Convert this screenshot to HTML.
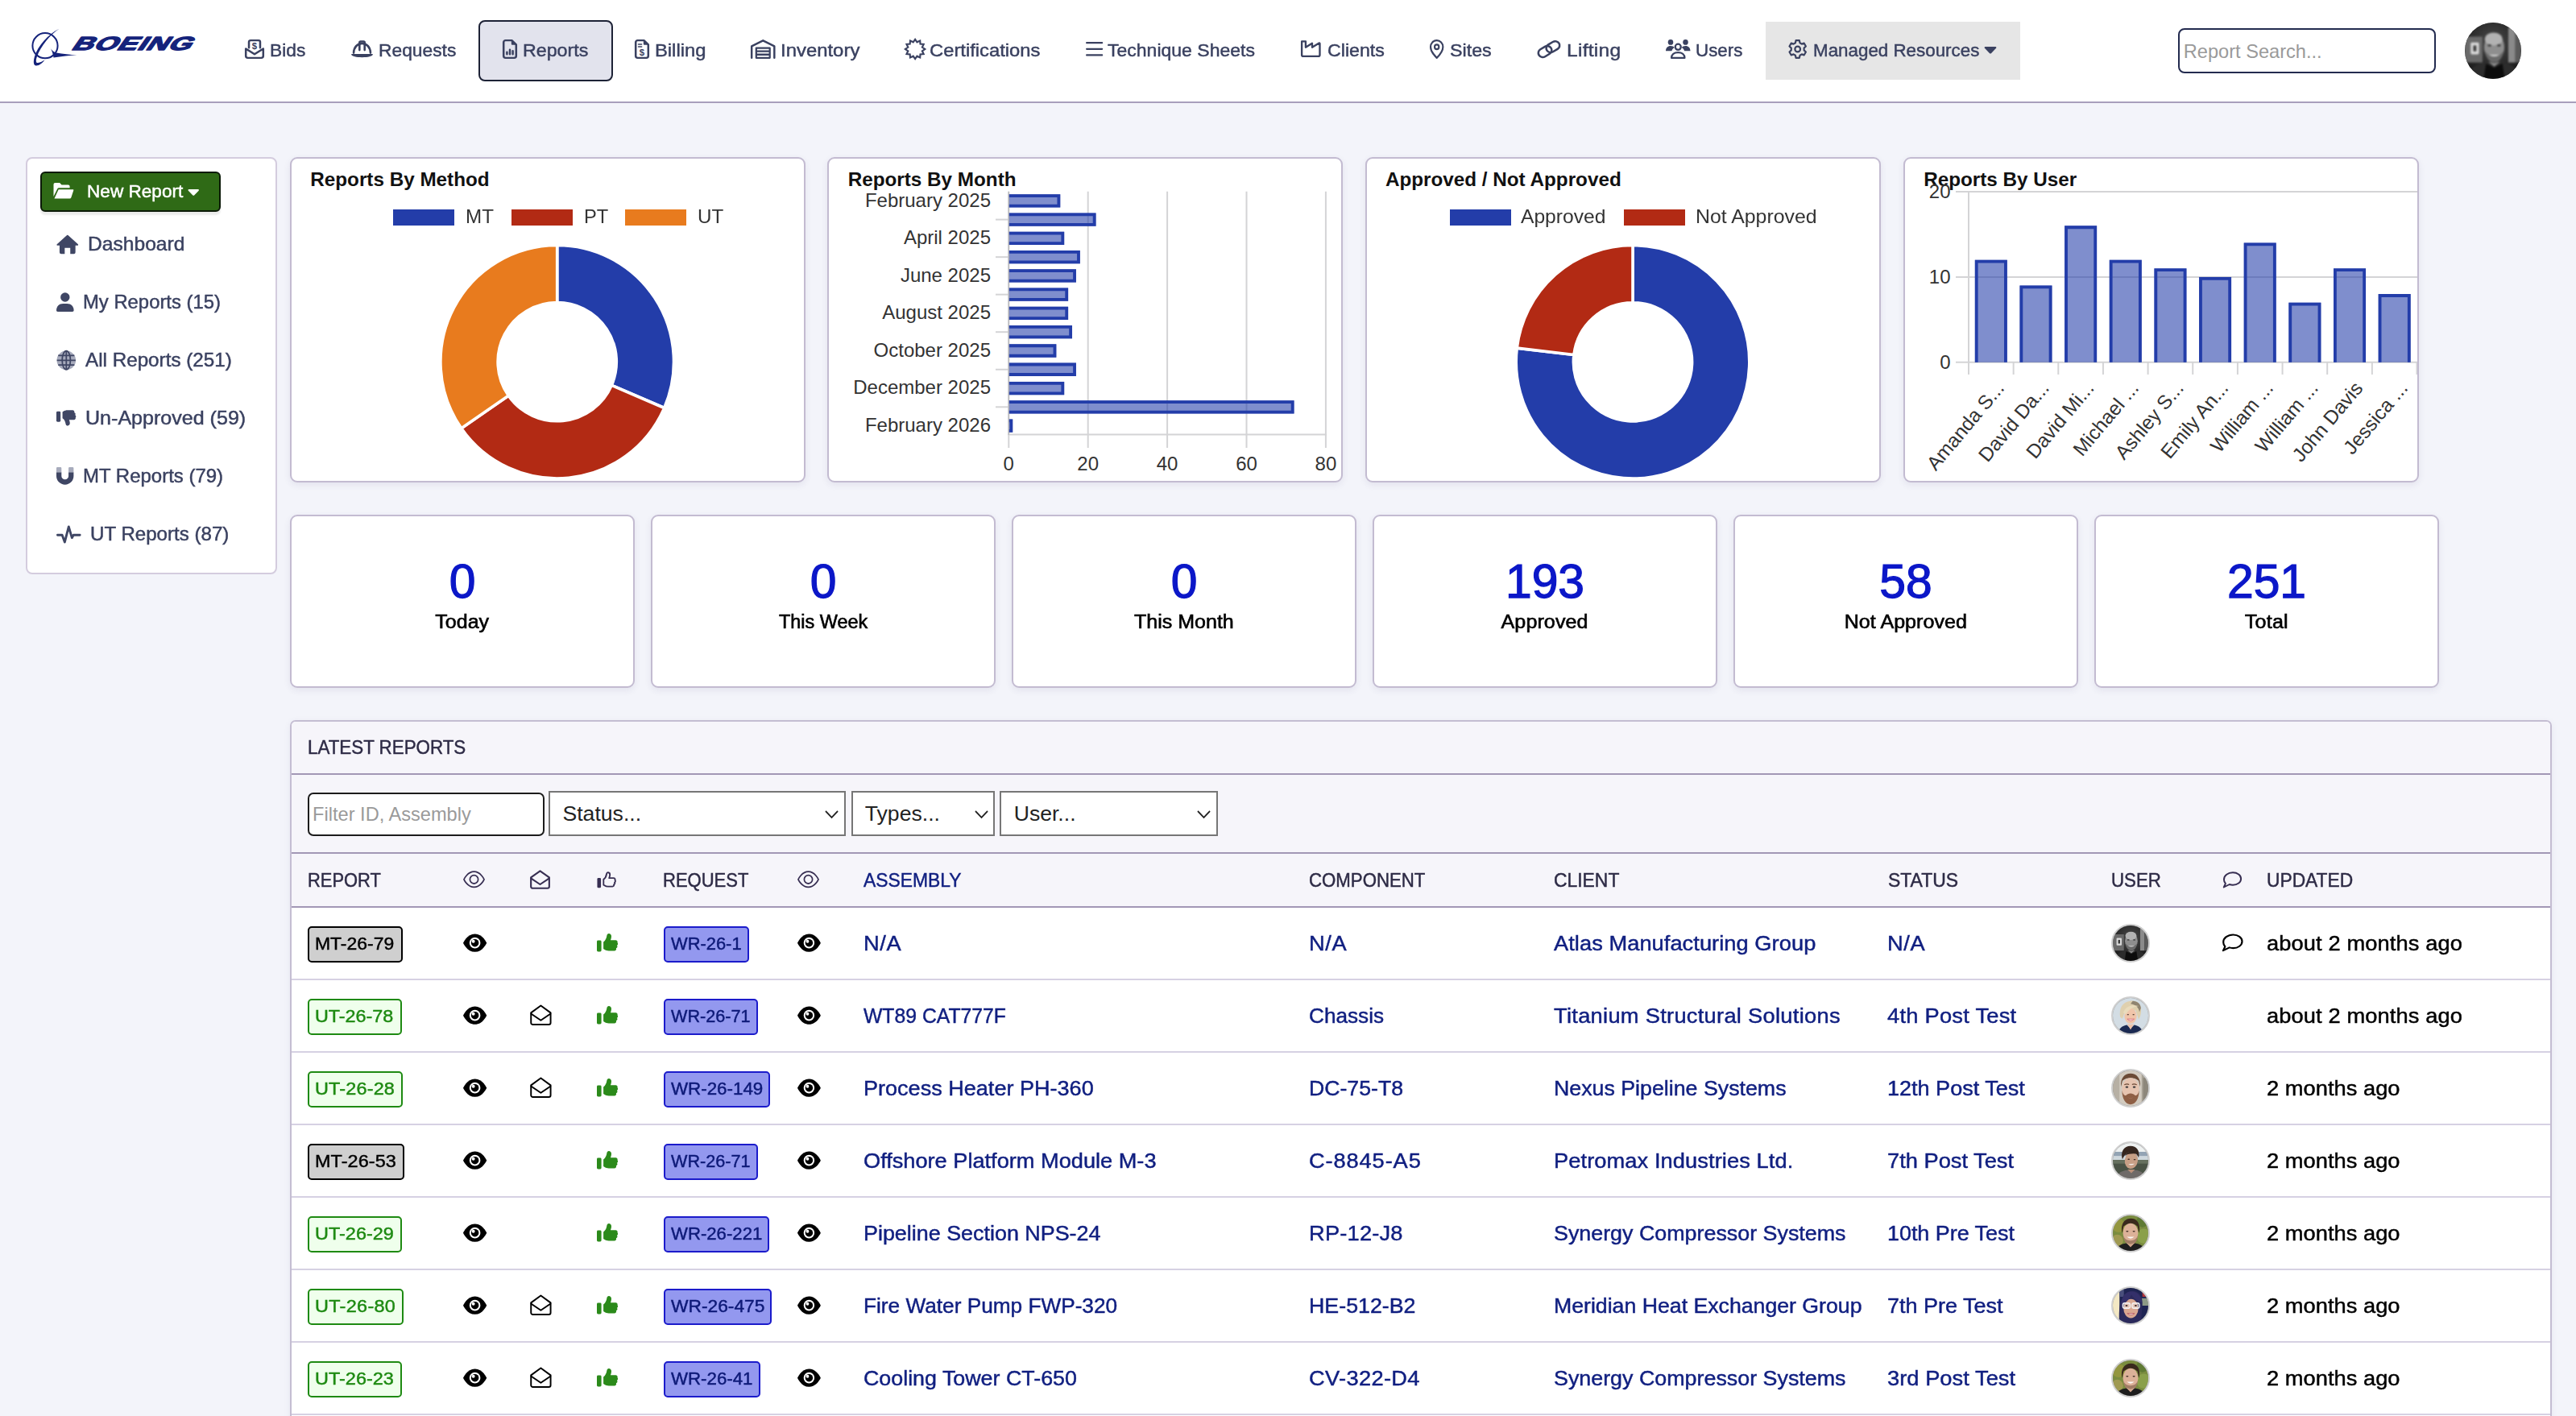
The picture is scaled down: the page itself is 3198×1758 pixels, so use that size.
<!DOCTYPE html>
<html lang="en"><head><meta charset="utf-8"><title>Reports Dashboard</title>
<style>
*{margin:0;padding:0;box-sizing:content-box}
html,body{width:3198px;height:1758px;overflow:hidden;background:#f3f4fa;font-family:"Liberation Sans",sans-serif;color:#111}
body{position:relative}
.a{position:absolute}
.t{position:absolute;white-space:pre;line-height:1}
.card{background:#fff;border:2px solid #c3bbd1;border-radius:9px;box-shadow:0 3px 9px rgba(70,50,110,.09)}
.m{-webkit-text-stroke:.45px currentColor}
.m2{-webkit-text-stroke:.6px currentColor}
.hl{background:#a297b5}
.rl{background:#d6d1e3}
.badge{border-radius:5px;border:2px solid #000}
.av{border-radius:50%;overflow:hidden;border:2px solid #cfcfcf;background:#888}
a{color:inherit;text-decoration:none}
.f{position:absolute;box-sizing:border-box;font-family:"Liberation Sans",sans-serif;outline:0;margin:0;background:#fff;line-height:normal}
input.f{font-size:23.600px;color:#222}
input.f::placeholder{color:#9a9a9a;opacity:1}
select.f{appearance:none;-webkit-appearance:none;border:2px solid #767676;border-radius:0;color:#222;font-size:26.600px;padding:0 0 0 15.300px}
</style></head><body>
<header class="a " style="left:0px;top:0px;width:3198px;height:126px;background:#fff;border-bottom:2px solid #a89fbc;">
<svg class="a " style="left:40px;top:35px;overflow:visible;" width="205" height="48" viewBox="0 0 205 48"><g transform="translate(-40 -35)" fill="#15237b">
<circle cx="56" cy="56.700" r="15.600" fill="none" stroke="#15237b" stroke-width="2"/>
<path d="M73.500 35.800C62 43 50.500 58 46 70c-1.800 5-1.500 8.500 1 8 3-.5 6-2 8.500-3.500-2.500 3.500-7.500 7.500-11 7-3.500-.5-3-6.500-1.500-11.500C47 57 60 42.500 73.500 35.800z"/>
<path d="M62 58.300c1.500 3.700 4 6.200 8 7.200 8 1.500 17 2.500 25.500 2.800-8.500.7-19.500 1.700-29 3.200-.5-4.500-2.500-9.500-4.500-13.200z"/>
</g>
<text transform="translate(47.600 27) skewX(-35) scale(1.560 1)" font-family="Liberation Sans, sans-serif" font-weight="700" font-size="23.300" letter-spacing=".55" fill="#15237b" stroke="#15237b" stroke-width="1.400" stroke-linejoin="round">BOEING</text></svg>
<nav>
<div class="a " style="left:594px;top:25px;width:162.5px;height:72px;background:#e2e3ed;border:2px solid #1d2236;border-radius:8px;">
</div>
<div class="a " style="left:2192px;top:27px;width:316px;height:72px;background:#e6e6e6;">
</div>
<a href="#">
<svg class="a" style="left:304px;top:48.8px;overflow:visible" width="24" height="24" viewBox="2 1.5 20 21" preserveAspectRatio="none"><path fill="none" stroke="#3a4160" stroke-width="2.1" stroke-linecap="round" stroke-linejoin="round" d="M6.2 10.5V4.2a1.7 1.7 0 0 1 1.7-1.7h8.2a1.7 1.7 0 0 1 1.7 1.7v6.3"/><path fill="none" stroke="#3a4160" stroke-width="2.1" stroke-linecap="round" stroke-linejoin="round" d="M3 11.5v8a2 2 0 0 0 2 2h14a2 2 0 0 0 2-2v-8l-9 6z"/><text x="12" y="11.6" font-family="Liberation Sans, sans-serif" font-size="9.5" font-weight="700" text-anchor="middle" fill="#3a4160">$</text></svg>
<span class="t m" style="left:334.97px;top:52.00px;font-size:22.5px;transform:scaleX(1.0130);transform-origin:0 0;color:#3a4160;">Bids</span>
</a>
<a href="#">
<svg class="a" style="left:436px;top:50.4px;overflow:visible" width="27" height="21.6" viewBox="1 3 22 17" preserveAspectRatio="none"><path fill="none" stroke="#3a4160" stroke-width="2.1" stroke-linecap="round" stroke-linejoin="round" d="M3.500 15.300a8.500 9.300 0 0 1 17 0"/><path fill="none" stroke="#3a4160" stroke-width="2.1" stroke-linecap="round" stroke-linejoin="round" d="M9.400 12.500V5.200a1 1 0 0 1 1-1h3.200a1 1 0 0 1 1 1v7.300"/><path fill="#3a4160" d="M1.500 16.400h21c.3 0 .5.300.4.600-.7 1.700-5 2.700-10.900 2.700S1.800 18.700 1.100 17c-.1-.300.100-.600.400-.600z"/></svg>
<span class="t m" style="left:469.97px;top:52.00px;font-size:22.5px;transform:scaleX(1.0135);transform-origin:0 0;color:#3a4160;">Requests</span>
</a>
<a href="#">
<svg class="a" style="left:624px;top:48.8px;overflow:visible" width="18" height="24" viewBox="4.5 1.5 15 21" preserveAspectRatio="none"><path fill="none" stroke="#3a4160" stroke-width="2.1" stroke-linecap="round" stroke-linejoin="round" d="M14 2.5H7.500a2 2 0 0 0-2 2v15a2 2 0 0 0 2 2h9a2 2 0 0 0 2-2V7z"/><path fill="#3a4160" d="M13.500 2.500l5 5h-4a1 1 0 0 1-1-1z"/><path fill="none" stroke="#3a4160" stroke-width="2.1" stroke-linecap="round" stroke-linejoin="round" d="M9 17.500v-2.300M12 17.500v-4.800M15 17.500v-3.500"/></svg>
<span class="t m" style="left:648.95px;top:52.00px;font-size:22.5px;transform:scaleX(1.0324);transform-origin:0 0;color:#3a4160;">Reports</span>
</a>
<a href="#">
<svg class="a" style="left:788px;top:48.8px;overflow:visible" width="18" height="24" viewBox="4.5 1.5 15 21" preserveAspectRatio="none"><path fill="none" stroke="#3a4160" stroke-width="2.1" stroke-linecap="round" stroke-linejoin="round" d="M14 2.500H7.500a2 2 0 0 0-2 2v15a2 2 0 0 0 2 2h9a2 2 0 0 0 2-2V7z"/><path fill="#3a4160" d="M13.500 2.500l5 5h-4a1 1 0 0 1-1-1z"/><path fill="none" stroke="#3a4160" stroke-width="1.300" stroke-linecap="round" d="M8.300 6.800h3.400M8.300 9.400h3.400"/><text x="12" y="19" font-family="Liberation Sans, sans-serif" font-size="9.500" font-weight="700" text-anchor="middle" fill="#3a4160">$</text></svg>
<span class="t m" style="left:812.93px;top:52.00px;font-size:22.5px;transform:scaleX(1.0553);transform-origin:0 0;color:#3a4160;">Billing</span>
</a>
<a href="#">
<svg class="a" style="left:931.5px;top:48.8px;overflow:visible" width="30.5" height="24" viewBox="1 2.4 26 20.1" preserveAspectRatio="none"><path fill="none" stroke="#3a4160" stroke-width="2.1" stroke-linecap="round" stroke-linejoin="round" d="M2 21.500V9.500L14 3.500l12 6v12"/><path fill="none" stroke="#3a4160" stroke-width="1.900" stroke-linejoin="round" d="M6.800 21.500V11.300h14.400v10.200zM6.800 14.700h14.400M6.800 18.100h14.400"/></svg>
<span class="t m" style="left:968.92px;top:52.00px;font-size:22.5px;transform:scaleX(1.0625);transform-origin:0 0;color:#3a4160;">Inventory</span>
</a>
<a href="#">
<svg class="a" style="left:1123.5px;top:48.8px;overflow:visible" width="24.2" height="24" viewBox="1.2 1.2 21.6 21.6" preserveAspectRatio="none"><path fill="none" stroke="#3a4160" stroke-width="1.900" stroke-linejoin="miter" d="M12.00 1.10 L14.10 4.18 L17.45 2.56 L17.73 6.27 L21.44 6.55 L19.82 9.90 L22.90 12.00 L19.82 14.10 L21.44 17.45 L17.73 17.73 L17.45 21.44 L14.10 19.82 L12.00 22.90 L9.90 19.82 L6.55 21.44 L6.27 17.73 L2.56 17.45 L4.18 14.10 L1.10 12.00 L4.18 9.90 L2.56 6.55 L6.27 6.27 L6.55 2.56 L9.90 4.18Z"/></svg>
<span class="t m" style="left:1153.93px;top:52.00px;font-size:22.5px;transform:scaleX(1.0562);transform-origin:0 0;color:#3a4160;">Certifications</span>
</a>
<a href="#">
<svg class="a" style="left:1347.7px;top:52px;overflow:visible" width="21.3" height="17.6" viewBox="1.5 4.5 21 15" preserveAspectRatio="none"><path fill="none" stroke="#3a4160" stroke-width="1.900" stroke-linecap="round" d="M2.500 5.500h19M2.500 12h19M2.500 18.500h19"/></svg>
<span class="t m" style="left:1374.96px;top:52.00px;font-size:22.5px;transform:scaleX(1.0227);transform-origin:0 0;color:#3a4160;">Technique Sheets</span>
</a>
<a href="#">
<svg class="a" style="left:1615.4px;top:50.4px;overflow:visible" width="24.6" height="21" viewBox="1 2 22 19" preserveAspectRatio="none"><path fill="none" stroke="#3a4160" stroke-width="2.1" stroke-linecap="round" stroke-linejoin="round" d="M2 18.500V3.200h4.300v6.800l7.200-4.600v4.600l7.700-4.900c.400-.200.800 0 .800.500V18.500a1.500 1.500 0 0 1-1.500 1.500h-17A1.500 1.500 0 0 1 2 18.500z"/></svg>
<span class="t m" style="left:1647.96px;top:52.00px;font-size:22.5px;transform:scaleX(1.0301);transform-origin:0 0;color:#3a4160;">Clients</span>
</a>
<a href="#">
<svg class="a" style="left:1775px;top:48.8px;overflow:visible" width="17.4" height="24" viewBox="0.5 1 17 22" preserveAspectRatio="none"><path fill="none" stroke="#3a4160" stroke-width="2.1" stroke-linecap="round" stroke-linejoin="round" d="M9 22s7.500-7 7.500-12.500a7.500 7.500 0 0 0-15 0C1.500 15 9 22 9 22z"/><circle cx="9" cy="9.500" r="2.600" fill="none" stroke="#3a4160" stroke-width="2.1" stroke-linecap="round" stroke-linejoin="round"/></svg>
<span class="t m" style="left:1799.95px;top:52.00px;font-size:22.5px;transform:scaleX(1.0344);transform-origin:0 0;color:#3a4160;">Sites</span>
</a>
<a href="#">
<svg class="a" style="left:1909px;top:49.8px;overflow:visible" width="28" height="22.2" viewBox="2.5 2.5 23 19" preserveAspectRatio="none"><g transform="rotate(-32 14 12)"><rect x="2" y="7.500" width="14.500" height="9" rx="4.500" fill="none" stroke="#3a4160" stroke-width="2.1" stroke-linecap="round" stroke-linejoin="round"/><rect x="11.500" y="7.500" width="14.500" height="9" rx="4.500" fill="none" stroke="#3a4160" stroke-width="2.1" stroke-linecap="round" stroke-linejoin="round"/></g></svg>
<span class="t m" style="left:1944.60px;top:52.00px;font-size:22.5px;letter-spacing:0.260px;transform:scaleX(1.0900);transform-origin:0 0;color:#3a4160;">Lifting</span>
</a>
<a href="#">
<svg class="a" style="left:2067.5px;top:48.8px;overflow:visible" width="30.5" height="24" viewBox="1 1.8 28 21.2" preserveAspectRatio="none"><circle cx="6.500" cy="4.800" r="3" fill="#3a4160"/><circle cx="23.500" cy="4.800" r="3" fill="#3a4160"/><path fill="#3a4160" d="M1 14.300c0-3.300 2.200-5.500 5.500-5.500 2 0 3.500.7 4.500 1.900-1.700.9-2.800 2.200-3.200 3.600zM29 14.300c0-3.300-2.200-5.500-5.500-5.500-2 0-3.500.7-4.500 1.900 1.700.9 2.800 2.200 3.200 3.600z"/><circle cx="15" cy="10" r="3.200" fill="none" stroke="#3a4160" stroke-width="2.1" stroke-linecap="round" stroke-linejoin="round"/><path fill="none" stroke="#3a4160" stroke-width="2.1" stroke-linecap="round" stroke-linejoin="round" d="M7.500 22c0-3.800 3-6 7.500-6s7.500 2.200 7.500 6z"/></svg>
<span class="t m" style="left:2104.99px;top:52.00px;font-size:22.5px;transform:scaleX(0.9929);transform-origin:0 0;color:#3a4160;">Users</span>
</a>
<a href="#">
<svg class="a" style="left:2219.6px;top:48.8px;overflow:visible" width="23.4" height="24" viewBox="0.8 0.8 22.4 22.4" preserveAspectRatio="none"><path fill="none" stroke="#3a4160" stroke-width="2.1" stroke-linecap="round" stroke-linejoin="round" d="M9.29 4.79 L9.95 1.91 L14.05 1.91 L14.71 4.79 L16.88 6.05 L19.72 5.18 L21.77 8.72 L19.60 10.75 L19.60 13.25 L21.77 15.28 L19.72 18.82 L16.88 17.95 L14.71 19.21 L14.05 22.09 L9.95 22.09 L9.29 19.21 L7.12 17.95 L4.28 18.82 L2.23 15.28 L4.40 13.25 L4.40 10.75 L2.23 8.72 L4.28 5.18 L7.12 6.05Z"/><circle cx="12" cy="12" r="3.200" fill="none" stroke="#3a4160" stroke-width="2.1" stroke-linecap="round" stroke-linejoin="round"/></svg>
<span class="t m" style="left:2250.99px;top:52.00px;font-size:22.5px;transform:scaleX(0.9939);transform-origin:0 0;color:#3a4160;">Managed Resources</span>
</a>
<svg class="a" style="left:2462.5px;top:58px;overflow:visible" width="16" height="9.5" viewBox="0 0 16 10" preserveAspectRatio="none"><path fill="#3a4160" d="M1.700 0h12.600c1 0 1.500 1.200.8 1.900L8.900 8.600a1.300 1.300 0 0 1-1.800 0L.9 1.900C.2 1.200.7 0 1.700 0z"/></svg>
</nav>
<input class="f" type="text" placeholder="Report Search..." style="left:2704px;top:35px;width:320px;height:55.600px;border:2px solid #232b4f;border-radius:8px;padding:3.600px 0 0 4.800px">
<div class="a" style="left:3060px;top:27.600px;width:70px;height:70px;border-radius:50%;overflow:hidden;background:#333">
<svg width="70" height="70" viewBox="0 0 48 48"><g style="filter:blur(.8px)"><defs><radialGradient id="bwg" cx=".5" cy=".35" r=".7"><stop offset="0" stop-color="#4a4a4a"/><stop offset="1" stop-color="#151515"/></radialGradient></defs>
<rect width="48" height="48" fill="url(#bwg)"/><rect x="0" y="12" width="15" height="22" fill="#6a6a6a"/><rect x="5" y="17" width="7" height="10" rx="1" fill="#d9d9d9"/><rect x="7.200" y="19.500" width="2.600" height="5" fill="#3a3a3a"/><rect x="37" y="4" width="6" height="30" fill="#8a8a8a"/><rect x="43" y="4" width="5" height="30" fill="#5a5a5a"/>
<ellipse cx="25" cy="21" rx="8.600" ry="11" fill="#8e8e8e"/><ellipse cx="24.500" cy="14" rx="7.600" ry="5.500" fill="#b2b2b2"/>
<path d="M17 24c1 7 4.500 10 8 10s7-3 8-10c-2 3-4.500 4.500-8 4.500S19 27 17 24z" fill="#6a6a6a"/><path d="M20.500 27.500q4.500 3 9 0z" fill="#d0d0d0"/>
<ellipse cx="21" cy="19.500" rx="1.600" ry=".8" fill="#2a2a2a"/><ellipse cx="29" cy="19.500" rx="1.600" ry=".8" fill="#2a2a2a"/>
<path d="M3 48c0-9 7-13 15-14l7 4 7-4c8 1 14 5 14 14z" fill="#2c2c2c"/><path d="M16 48l2-13 7 3.500 7-3.500 2 13z" fill="#0c0c0c"/><path d="M20 33.500l5 4 5-4-5 1z" fill="#8a8a8a"/></g></svg></div>
</header>
<aside class="a " style="left:32px;top:195px;width:308px;height:514px;background:#fff;border:2px solid #d4ccde;border-radius:8px;">
<div class="a " style="left:16px;top:16px;width:220px;height:46px;background:#2f6a16;border:2px solid #0c1a08;border-radius:6px;box-shadow:0 4px 2px rgba(0,0,0,.08);">
<svg class="a" style="left:13.5px;top:12px;overflow:visible" width="25.5" height="19.5" viewBox="0 0 26 20" preserveAspectRatio="none"><path fill="#fff" d="M0.500 17.500V2a2 2 0 0 1 2-2h5.800l2.400 2.500H19a2 2 0 0 1 2 2V6.500H7.500a2.500 2.500 0 0 0-2.300 1.500z"/><path fill="#fff" d="M6.800 8.500h18.200c.6 0 1 .6.800 1.100L22.800 18.700a2 2 0 0 1-1.900 1.300H1.500z"/></svg>
<span class="t m" style="left:55.98px;top:13.00px;font-size:21.3px;transform:scaleX(1.0607);transform-origin:0 0;color:#fff;">New Report</span>
<svg class="a" style="left:180.6px;top:19.6px;overflow:visible" width="14.5" height="8.6" viewBox="0 0 16 10" preserveAspectRatio="none"><path fill="#fff" d="M1.700 0h12.600c1 0 1.500 1.200.8 1.900L8.900 8.600a1.300 1.300 0 0 1-1.800 0L.9 1.900C.2 1.200.7 0 1.700 0z"/></svg>
</div>
<a href="#">
<svg class="a" style="left:36.0px;top:93.8px;overflow:visible" width="27.6" height="24.2" viewBox="0 0 28 24" preserveAspectRatio="none"><path fill="#3f4664" d="M14 .8a1 1 0 0 1 .7.300L27.300 12.200a.9.9 0 0 1-.6 1.500H24V22a2 2 0 0 1-2 2h-4.500v-7.500h-7V24H6a2 2 0 0 1-2-2v-8.300H1.300a.9.9 0 0 1-.6-1.500L13.300 1.100a1 1 0 0 1 .7-.3z"/></svg>
<span class="t m" style="left:74.89px;top:95.00px;font-size:23.2px;transform:scaleX(1.0613);transform-origin:0 0;color:#3a4160;">Dashboard</span>
</a>
<a href="#">
<svg class="a" style="left:36.0px;top:166px;overflow:visible" width="21.6" height="24" viewBox="0 0 22 24" preserveAspectRatio="none"><circle cx="11" cy="6" r="5.800" fill="#3f4664"/><path fill="#3f4664" d="M0 22.300C0 17.300 3.500 14 8.500 14h5c5 0 8.500 3.300 8.500 8.300 0 1-.7 1.700-1.700 1.700H1.700C.7 24 0 23.300 0 22.300z"/></svg>
<span class="t m" style="left:68.93px;top:167.00px;font-size:23.2px;transform:scaleX(1.0281);transform-origin:0 0;color:#3a4160;">My Reports (15)</span>
</a>
<a href="#">
<svg class="a" style="left:36.0px;top:238px;overflow:visible" width="24.6" height="24.6" viewBox="0 0 24 24" preserveAspectRatio="none"><circle cx="12" cy="12" r="11.500" fill="#a7abbc"/><g fill="none" stroke="#3f4664" stroke-width="1.700"><ellipse cx="12" cy="12" rx="5" ry="11.300"/><path d="M.7 12h22.600M12 .7v22.600M2.200 6.200h19.600M2.200 17.800h19.600"/></g></svg>
<span class="t m" style="left:71.51px;top:239.00px;font-size:23.2px;transform:scaleX(1.0449);transform-origin:0 0;color:#3a4160;">All Reports (251)</span>
</a>
<a href="#">
<svg class="a" style="left:36.0px;top:311px;overflow:visible" width="24.6" height="21.5" viewBox="0 0 26 24" preserveAspectRatio="none"><g transform="translate(0 24) scale(1 -1)"><rect x="0" y="6.500" width="5.500" height="14.500" rx="1.500" fill="#3f4664"/><path fill="#3f4664" d="M8 11.500c2.500-1.800 3.700-4.500 4.200-8C12.400 1.800 13.600.800 15 1c2 .3 2.900 2 2.700 4.200-.1 1.300-.5 2.600-1 4h6.300a2.300 2.300 0 0 1 2.100 3.100 2.300 2.300 0 0 1-.6 3.600 2.300 2.300 0 0 1-1 3.400 2.300 2.300 0 0 1-2.200 3.200h-6.800c-2 0-3.800-.6-5.400-1.700L8 20.200z"/></g></svg>
<span class="t m" style="left:71.87px;top:311.00px;font-size:23.2px;transform:scaleX(1.0807);transform-origin:0 0;color:#3a4160;">Un-Approved (59)</span>
</a>
<a href="#">
<svg class="a" style="left:36.0px;top:383px;overflow:visible" width="21.4" height="21.4" viewBox="0 0 22 22" preserveAspectRatio="none"><path fill="#3f4664" d="M0 6.500h6.500v4.800a4.500 4.500 0 0 0 9 0V6.500H22v4.800a11 11 0 0 1-22 0z"/><path fill="#a7abbc" d="M0 1.200A1.200 1.200 0 0 1 1.200 0h4.100a1.200 1.200 0 0 1 1.200 1.200V6.500H0zM15.500 1.200A1.200 1.200 0 0 1 16.700 0h4.100A1.200 1.200 0 0 1 22 1.200V6.500h-6.500z"/></svg>
<span class="t m" style="left:68.92px;top:383.00px;font-size:23.2px;transform:scaleX(1.0340);transform-origin:0 0;color:#3a4160;">MT Reports (79)</span>
</a>
<a href="#">
<svg class="a" style="left:36.0px;top:454.5px;overflow:visible" width="30.6" height="23.5" viewBox="0 0 32 24" preserveAspectRatio="none"><path fill="none" stroke="#3f4664" stroke-width="3" stroke-linecap="round" stroke-linejoin="round" d="M1.500 12.500h6l3.300 9L16 2l4.200 14 2-3.500H30.500"/></svg>
<span class="t m" style="left:77.91px;top:455.00px;font-size:23.2px;transform:scaleX(1.0397);transform-origin:0 0;color:#3a4160;">UT Reports (87)</span>
</a>
</aside>
<main>
<section class="a card" style="left:360px;top:195px;width:636px;height:400px;">
<h3 class="t" style="left:23.31px;top:14.00px;font-size:24.25px;color:#111;font-weight:700;">Reports By Method</h3>
<div class="a" style="left:126px;top:63px;width:76.400px;height:19.800px;background:#233da9"></div>
<span class="t" style="left:215.91px;top:60.00px;font-size:24px;transform:scaleX(1.0082);transform-origin:0 0;color:#333;">MT</span>
<div class="a" style="left:272.9px;top:63px;width:76.400px;height:19.800px;background:#b22a14"></div>
<span class="t" style="left:362.64px;top:60.00px;font-size:24px;transform:scaleX(0.9859);transform-origin:0 0;color:#333;">PT</span>
<div class="a" style="left:414px;top:63px;width:76.400px;height:19.800px;background:#e87b1e"></div>
<span class="t" style="left:503.71px;top:60.00px;font-size:24px;transform:scaleX(1.0075);transform-origin:0 0;color:#333;">UT</span>
<svg class="a " style="left:0px;top:0px;" width="636" height="400" viewBox="0 0 636 400"><path d="M329.70 107.40A144.8 144.8 0 0 1 462.68 309.49L397.29 281.32A73.6 73.6 0 0 0 329.70 178.60Z" fill="#233da9" stroke="#fff" stroke-width="3.600" stroke-linejoin="round"/><path d="M462.68 309.49A144.8 144.8 0 0 1 210.77 334.80L269.25 294.18A73.6 73.6 0 0 0 397.29 281.32Z" fill="#b22a14" stroke="#fff" stroke-width="3.600" stroke-linejoin="round"/><path d="M210.77 334.80A144.8 144.8 0 0 1 329.70 107.40L329.70 178.60A73.6 73.6 0 0 0 269.25 294.18Z" fill="#e87b1e" stroke="#fff" stroke-width="3.600" stroke-linejoin="round"/></svg>
</section>
<section class="a card" style="left:1027px;top:195px;width:636px;height:400px;">
<h3 class="t" style="left:23.71px;top:14.00px;font-size:24.25px;color:#111;font-weight:700;">Reports By Month</h3>
<svg class="a " style="left:0px;top:0px;" width="636" height="400" viewBox="0 0 636 400"><g font-family="Liberation Sans, sans-serif"><path d="M223.30 40.70V359.00" stroke="#d4d4d6" stroke-width="2"/><path d="M321.70 40.70V359.00" stroke="#d4d4d6" stroke-width="2"/><path d="M420.10 40.70V359.00" stroke="#d4d4d6" stroke-width="2"/><path d="M518.50 40.70V359.00" stroke="#d4d4d6" stroke-width="2"/><path d="M616.90 40.70V359.00" stroke="#d4d4d6" stroke-width="2"/><path d="M222.30 342.50H617.90" stroke="#d4d4d6" stroke-width="2"/><path d="M207.00 75.60H223.30" stroke="#d4d4d6" stroke-width="2"/><path d="M207.00 122.14H223.30" stroke="#d4d4d6" stroke-width="2"/><path d="M207.00 168.68H223.30" stroke="#d4d4d6" stroke-width="2"/><path d="M207.00 215.22H223.30" stroke="#d4d4d6" stroke-width="2"/><path d="M207.00 261.76H223.30" stroke="#d4d4d6" stroke-width="2"/><path d="M207.00 308.30H223.30" stroke="#d4d4d6" stroke-width="2"/><rect x="223.30" y="44.18" width="63.96" height="16.3" fill="rgba(35,61,169,.58)"/><path d="M223.30 46.08H285.36V58.58H223.30" fill="none" stroke="#233da9" stroke-width="3.8"/><rect x="223.30" y="67.45" width="108.24" height="16.3" fill="rgba(35,61,169,.58)"/><path d="M223.30 69.35H329.64V81.85H223.30" fill="none" stroke="#233da9" stroke-width="3.8"/><rect x="223.30" y="90.72" width="68.88" height="16.3" fill="rgba(35,61,169,.58)"/><path d="M223.30 92.62H290.28V105.12H223.30" fill="none" stroke="#233da9" stroke-width="3.8"/><rect x="223.30" y="113.99" width="88.56" height="16.3" fill="rgba(35,61,169,.58)"/><path d="M223.30 115.89H309.96V128.39H223.30" fill="none" stroke="#233da9" stroke-width="3.8"/><rect x="223.30" y="137.26" width="83.64" height="16.3" fill="rgba(35,61,169,.58)"/><path d="M223.30 139.16H305.04V151.66H223.30" fill="none" stroke="#233da9" stroke-width="3.8"/><rect x="223.30" y="160.53" width="73.80" height="16.3" fill="rgba(35,61,169,.58)"/><path d="M223.30 162.43H295.20V174.93H223.30" fill="none" stroke="#233da9" stroke-width="3.8"/><rect x="223.30" y="183.80" width="73.80" height="16.3" fill="rgba(35,61,169,.58)"/><path d="M223.30 185.70H295.20V198.20H223.30" fill="none" stroke="#233da9" stroke-width="3.8"/><rect x="223.30" y="207.07" width="78.72" height="16.3" fill="rgba(35,61,169,.58)"/><path d="M223.30 208.97H300.12V221.47H223.30" fill="none" stroke="#233da9" stroke-width="3.8"/><rect x="223.30" y="230.34" width="59.04" height="16.3" fill="rgba(35,61,169,.58)"/><path d="M223.30 232.24H280.44V244.74H223.30" fill="none" stroke="#233da9" stroke-width="3.8"/><rect x="223.30" y="253.61" width="83.64" height="16.3" fill="rgba(35,61,169,.58)"/><path d="M223.30 255.51H305.04V268.01H223.30" fill="none" stroke="#233da9" stroke-width="3.8"/><rect x="223.30" y="276.88" width="68.88" height="16.3" fill="rgba(35,61,169,.58)"/><path d="M223.30 278.78H290.28V291.28H223.30" fill="none" stroke="#233da9" stroke-width="3.8"/><rect x="223.30" y="300.15" width="354.24" height="16.3" fill="rgba(35,61,169,.58)"/><path d="M223.30 302.05H575.64V314.55H223.30" fill="none" stroke="#233da9" stroke-width="3.8"/><rect x="223.30" y="323.42" width="4.92" height="16.3" fill="rgba(35,61,169,.58)"/><path d="M223.30 325.32H226.32V337.82H223.30" fill="none" stroke="#233da9" stroke-width="3.8"/><path d="M223.30 40.70V343.00" stroke="rgba(180,180,185,.8)" stroke-width="1.500"/><text x="201.00" y="59.73" text-anchor="end" font-size="24" fill="#333">February 2025</text><text x="201.00" y="106.27" text-anchor="end" font-size="24" fill="#333">April 2025</text><text x="201.00" y="152.81" text-anchor="end" font-size="24" fill="#333">June 2025</text><text x="201.00" y="199.35" text-anchor="end" font-size="24" fill="#333">August 2025</text><text x="201.00" y="245.89" text-anchor="end" font-size="24" fill="#333">October 2025</text><text x="201.00" y="292.43" text-anchor="end" font-size="24" fill="#333">December 2025</text><text x="201.00" y="338.97" text-anchor="end" font-size="24" fill="#333">February 2026</text><text x="223.30" y="386.80" text-anchor="middle" font-size="24" fill="#333">0</text><text x="321.70" y="386.80" text-anchor="middle" font-size="24" fill="#333">20</text><text x="420.10" y="386.80" text-anchor="middle" font-size="24" fill="#333">40</text><text x="518.50" y="386.80" text-anchor="middle" font-size="24" fill="#333">60</text><text x="616.90" y="386.80" text-anchor="middle" font-size="24" fill="#333">80</text></g></svg>
</section>
<section class="a card" style="left:1695px;top:195px;width:636px;height:400px;">
<h3 class="t" style="left:22.91px;top:14.00px;font-size:24.25px;color:#111;font-weight:700;">Approved / Not Approved</h3>
<div class="a" style="left:102.5px;top:63px;width:76.400px;height:19.800px;background:#233da9"></div>
<span class="t" style="left:191.39px;top:60.00px;font-size:24px;transform:scaleX(1.0262);transform-origin:0 0;color:#333;">Approved</span>
<div class="a" style="left:319px;top:63px;width:76.400px;height:19.800px;background:#b22a14"></div>
<span class="t" style="left:408.38px;top:60.00px;font-size:24px;transform:scaleX(1.0351);transform-origin:0 0;color:#333;">Not Approved</span>
<svg class="a " style="left:0px;top:0px;" width="636" height="400" viewBox="0 0 636 400"><path d="M330.00 107.50A144.8 144.8 0 1 1 186.22 235.12L256.92 243.57A73.6 73.6 0 1 0 330.00 178.70Z" fill="#233da9" stroke="#fff" stroke-width="3.600" stroke-linejoin="round"/><path d="M186.22 235.12A144.8 144.8 0 0 1 330.00 107.50L330.00 178.70A73.6 73.6 0 0 0 256.92 243.57Z" fill="#b22a14" stroke="#fff" stroke-width="3.600" stroke-linejoin="round"/></svg>
</section>
<section class="a card" style="left:2363px;top:195px;width:636px;height:400px;">
<h3 class="t" style="left:23.21px;top:14.00px;font-size:24.25px;color:#111;font-weight:700;">Reports By User</h3>
<svg class="a " style="left:0px;top:0px;overflow:hidden;border-radius:0 7px 7px 0;" width="636" height="400" viewBox="0 0 636 400"><g font-family="Liberation Sans, sans-serif"><path d="M63.00 252.80H638.00" stroke="#d4d4d6" stroke-width="2"/><text x="56.50" y="261.00" text-anchor="end" font-size="24" fill="#333">0</text><path d="M63.00 146.90H638.00" stroke="#d4d4d6" stroke-width="2"/><text x="56.50" y="155.10" text-anchor="end" font-size="24" fill="#333">10</text><path d="M63.00 41.00H638.00" stroke="#d4d4d6" stroke-width="2"/><text x="56.50" y="49.20" text-anchor="end" font-size="24" fill="#333">20</text><path d="M79.00 41.00V268.00" stroke="#d4d4d6" stroke-width="2"/><path d="M134.65 252.80V268.00" stroke="#d4d4d6" stroke-width="2"/><path d="M190.30 252.80V268.00" stroke="#d4d4d6" stroke-width="2"/><path d="M245.95 252.80V268.00" stroke="#d4d4d6" stroke-width="2"/><path d="M301.60 252.80V268.00" stroke="#d4d4d6" stroke-width="2"/><path d="M357.25 252.80V268.00" stroke="#d4d4d6" stroke-width="2"/><path d="M412.90 252.80V268.00" stroke="#d4d4d6" stroke-width="2"/><path d="M468.55 252.80V268.00" stroke="#d4d4d6" stroke-width="2"/><path d="M524.20 252.80V268.00" stroke="#d4d4d6" stroke-width="2"/><path d="M579.85 252.80V268.00" stroke="#d4d4d6" stroke-width="2"/><path d="M635.50 252.80V268.00" stroke="#d4d4d6" stroke-width="2"/><rect x="86.82" y="125.72" width="40" height="127.08" fill="rgba(35,61,169,.58)"/><path d="M88.72 252.80V127.62H124.92V252.80" fill="none" stroke="#233da9" stroke-width="3.8"/><text transform="translate(118.32 280.50) rotate(-50)" text-anchor="end" y="8" font-size="24.400" fill="#333">Amanda S...</text><rect x="142.47" y="157.49" width="40" height="95.31" fill="rgba(35,61,169,.58)"/><path d="M144.37 252.80V159.39H180.57V252.80" fill="none" stroke="#233da9" stroke-width="3.8"/><text transform="translate(173.97 280.50) rotate(-50)" text-anchor="end" y="8" font-size="24.400" fill="#333">David Da...</text><rect x="198.12" y="83.36" width="40" height="169.44" fill="rgba(35,61,169,.58)"/><path d="M200.03 252.80V85.26H236.22V252.80" fill="none" stroke="#233da9" stroke-width="3.8"/><text transform="translate(229.62 280.50) rotate(-50)" text-anchor="end" y="8" font-size="24.400" fill="#333">David Mi...</text><rect x="253.78" y="125.72" width="40" height="127.08" fill="rgba(35,61,169,.58)"/><path d="M255.68 252.80V127.62H291.88V252.80" fill="none" stroke="#233da9" stroke-width="3.8"/><text transform="translate(285.28 280.50) rotate(-50)" text-anchor="end" y="8" font-size="24.400" fill="#333">Michael ...</text><rect x="309.43" y="136.31" width="40" height="116.49" fill="rgba(35,61,169,.58)"/><path d="M311.33 252.80V138.21H347.53V252.80" fill="none" stroke="#233da9" stroke-width="3.8"/><text transform="translate(340.93 280.50) rotate(-50)" text-anchor="end" y="8" font-size="24.400" fill="#333">Ashley S...</text><rect x="365.07" y="146.90" width="40" height="105.90" fill="rgba(35,61,169,.58)"/><path d="M366.97 252.80V148.80H403.17V252.80" fill="none" stroke="#233da9" stroke-width="3.8"/><text transform="translate(396.57 280.50) rotate(-50)" text-anchor="end" y="8" font-size="24.400" fill="#333">Emily An...</text><rect x="420.72" y="104.54" width="40" height="148.26" fill="rgba(35,61,169,.58)"/><path d="M422.62 252.80V106.44H458.82V252.80" fill="none" stroke="#233da9" stroke-width="3.8"/><text transform="translate(452.22 280.50) rotate(-50)" text-anchor="end" y="8" font-size="24.400" fill="#333">William ...</text><rect x="476.38" y="178.67" width="40" height="74.13" fill="rgba(35,61,169,.58)"/><path d="M478.27 252.80V180.57H514.48V252.80" fill="none" stroke="#233da9" stroke-width="3.8"/><text transform="translate(507.88 280.50) rotate(-50)" text-anchor="end" y="8" font-size="24.400" fill="#333">William ...</text><rect x="532.03" y="136.31" width="40" height="116.49" fill="rgba(35,61,169,.58)"/><path d="M533.93 252.80V138.21H570.13V252.80" fill="none" stroke="#233da9" stroke-width="3.8"/><text transform="translate(563.53 280.50) rotate(-50)" text-anchor="end" y="8" font-size="24.400" fill="#333">John Davis</text><rect x="587.68" y="168.08" width="40" height="84.72" fill="rgba(35,61,169,.58)"/><path d="M589.58 252.80V169.98H625.78V252.80" fill="none" stroke="#233da9" stroke-width="3.8"/><text transform="translate(619.18 280.50) rotate(-50)" text-anchor="end" y="8" font-size="24.400" fill="#333">Jessica ...</text></g></svg>
</section>
<section class="a card" style="left:360px;top:639px;width:424px;height:211px;">
<div class="t" style="left:195.65px;top:52.00px;font-size:58.8px;color:#0b17c8;-webkit-text-stroke:1.250px #0b17c8;">0</div>
<div class="t m2" style="left:181.31px;top:120.00px;font-size:23px;transform:scaleX(1.0864);transform-origin:30.69px 0;color:#000;">Today</div>
</section>
<section class="a card" style="left:808px;top:639px;width:424px;height:211px;">
<div class="t" style="left:195.65px;top:52.00px;font-size:58.8px;color:#0b17c8;-webkit-text-stroke:1.250px #0b17c8;">0</div>
<div class="t m2" style="left:157.89px;top:120.00px;font-size:23px;transform:scaleX(1.0200);transform-origin:54.11px 0;color:#000;">This Week</div>
</section>
<section class="a card" style="left:1256px;top:639px;width:424px;height:211px;">
<div class="t" style="left:195.65px;top:52.00px;font-size:58.8px;color:#0b17c8;-webkit-text-stroke:1.250px #0b17c8;">0</div>
<div class="t m2" style="left:155.12px;top:120.00px;font-size:23px;transform:scaleX(1.0880);transform-origin:56.88px 0;color:#000;">This Month</div>
</section>
<section class="a card" style="left:1704px;top:639px;width:424px;height:211px;">
<div class="t" style="left:162.95px;top:52.00px;font-size:58.8px;color:#0b17c8;-webkit-text-stroke:1.250px #0b17c8;">193</div>
<div class="t m2" style="left:162.47px;top:120.00px;font-size:23px;letter-spacing:0.085px;transform:scaleX(1.0900);transform-origin:49.53px 0;color:#000;">Approved</div>
</section>
<section class="a card" style="left:2152px;top:639px;width:424px;height:211px;">
<div class="t" style="left:179.30px;top:52.00px;font-size:58.8px;color:#0b17c8;-webkit-text-stroke:1.250px #0b17c8;">58</div>
<div class="t m2" style="left:142.19px;top:120.00px;font-size:23px;letter-spacing:0.022px;transform:scaleX(1.0900);transform-origin:69.81px 0;color:#000;">Not Approved</div>
</section>
<section class="a card" style="left:2600px;top:639px;width:424px;height:211px;">
<div class="t" style="left:162.95px;top:52.00px;font-size:58.8px;color:#0b17c8;-webkit-text-stroke:1.250px #0b17c8;">251</div>
<div class="t m2" style="left:187.28px;top:120.00px;font-size:23px;letter-spacing:0.209px;transform:scaleX(1.0900);transform-origin:24.72px 0;color:#000;">Total</div>
</section>
<section class="a " style="left:360px;top:894px;width:2804px;height:896px;background:#fff;border:2px solid #c4bdd2;border-radius:7px 7px 0 0;overflow:hidden;box-shadow:0 2px 8px rgba(70,50,110,.07);">
<div class="a" style="left:0;top:0;width:100%;height:230px;background:#f6f5fa"></div>
<div class="a hl" style="left:0;top:64px;width:100%;height:2px"></div>
<div class="a hl" style="left:0;top:162px;width:100%;height:2px"></div>
<div class="a hl" style="left:0;top:229px;width:100%;height:2px"></div>
<h2 class="t m" style="left:19.59px;top:21.00px;font-size:23.5px;transform:scaleX(0.9509);transform-origin:0 0;color:#2d2a45;font-weight:400;">LATEST REPORTS</h2>
<input class="f" type="text" placeholder="Filter ID, Assembly" style="left:20.3px;top:88px;width:293.300px;height:54px;border:2px solid #1c1c1c;border-radius:7px;padding:0 0 0 3.800px">
<select class="f" style="left:319.2px;top:86px;width:368.4px;height:56px"><option>Status...</option></select>
<svg class="a" style="left:661.5px;top:109.5px;overflow:visible" width="17" height="10" viewBox="0 0 18 10" preserveAspectRatio="none"><path fill="none" stroke="#222" stroke-width="1.800" d="M1 1l8 8 8-8"/></svg>
<select class="f" style="left:694.5px;top:86px;width:178.2px;height:56px"><option>Types...</option></select>
<svg class="a" style="left:847.6px;top:109.5px;overflow:visible" width="17" height="10" viewBox="0 0 18 10" preserveAspectRatio="none"><path fill="none" stroke="#222" stroke-width="1.800" d="M1 1l8 8 8-8"/></svg>
<select class="f" style="left:879.4px;top:86px;width:270.6px;height:56px"><option>User...</option></select>
<svg class="a" style="left:1124.3px;top:109.5px;overflow:visible" width="17" height="10" viewBox="0 0 18 10" preserveAspectRatio="none"><path fill="none" stroke="#222" stroke-width="1.800" d="M1 1l8 8 8-8"/></svg>
<span class="t m" style="left:19.62px;top:186.00px;font-size:23px;transform:scaleX(0.9512);transform-origin:0 0;color:#2d2a45;">REPORT</span>
<span class="t m" style="left:461.41px;top:186.00px;font-size:23px;transform:scaleX(0.9568);transform-origin:0 0;color:#2d2a45;">REQUEST</span>
<span class="t m" style="left:710.27px;top:186.00px;font-size:23px;transform:scaleX(0.9941);transform-origin:0 0;color:#101f80;">ASSEMBLY</span>
<span class="t m" style="left:1263.30px;top:186.00px;font-size:23px;transform:scaleX(0.9658);transform-origin:0 0;color:#2d2a45;">COMPONENT</span>
<span class="t m" style="left:1567.07px;top:186.00px;font-size:23px;transform:scaleX(0.9949);transform-origin:0 0;color:#2d2a45;">CLIENT</span>
<span class="t m" style="left:1981.57px;top:186.00px;font-size:23px;transform:scaleX(0.9972);transform-origin:0 0;color:#2d2a45;">STATUS</span>
<span class="t m" style="left:2258.50px;top:186.00px;font-size:23px;transform:scaleX(0.9683);transform-origin:0 0;color:#2d2a45;">USER</span>
<span class="t m" style="left:2452.27px;top:186.00px;font-size:23px;transform:scaleX(0.9905);transform-origin:0 0;color:#2d2a45;">UPDATED</span>
<svg class="a" style="left:213.2px;top:185px;overflow:visible" width="27" height="21.6" viewBox="0 0 28 22" preserveAspectRatio="none"><path fill="none" stroke="#372e52" stroke-width="1.800" stroke-linejoin="round" d="M1 11S5.500 1.200 14 1.200 27 11 27 11s-4.500 9.800-13 9.800S1 11 1 11z"/><circle cx="14" cy="11" r="5.300" fill="none" stroke="#372e52" stroke-width="1.800"/></svg>
<svg class="a" style="left:295.5px;top:184px;overflow:visible" width="25" height="24" viewBox="0 0 26 26" preserveAspectRatio="none"><path fill="none" stroke="#372e52" stroke-width="2.2" stroke-linejoin="round" d="M1.200 10.200L13 1.500l11.800 8.700V22.500a2.200 2.200 0 0 1-2.200 2.200H3.400a2.200 2.200 0 0 1-2.200-2.200z"/><path fill="none" stroke="#372e52" stroke-width="2.2" stroke-linejoin="round" stroke-linecap="round" d="M1.500 11.500L13 19.500l11.500-8"/></svg>
<svg class="a" style="left:378.8px;top:185.3px;overflow:visible" width="24" height="21.7" viewBox="0 0 26 24" preserveAspectRatio="none"><rect x="0.500" y="10" width="5" height="13.500" rx="1.500" fill="#372e52"/><path fill="none" stroke="#372e52" stroke-width="2" stroke-linejoin="round" d="M9 12c2.300-1.700 3.500-4 4-7.300.2-1.500 1.100-2.400 2.300-2.200 1.700.3 2.400 1.700 2.200 3.600-.1 1.200-.5 2.500-1 3.900h6a2 2 0 0 1 1.800 2.800 2 2 0 0 1-.5 3.200 2 2 0 0 1-.9 3 2 2 0 0 1-1.900 2.700h-6c-1.800 0-3.400-.5-4.800-1.500L9 19.500z"/></svg>
<svg class="a" style="left:628px;top:185px;overflow:visible" width="27" height="21.6" viewBox="0 0 28 22" preserveAspectRatio="none"><path fill="none" stroke="#372e52" stroke-width="1.800" stroke-linejoin="round" d="M1 11S5.500 1.200 14 1.200 27 11 27 11s-4.500 9.800-13 9.800S1 11 1 11z"/><circle cx="14" cy="11" r="5.300" fill="none" stroke="#372e52" stroke-width="1.800"/></svg>
<svg class="a" style="left:2396.8px;top:185.6px;overflow:visible" width="24.2" height="21" viewBox="0 0 27 24" preserveAspectRatio="none"><path fill="none" stroke="#372e52" stroke-width="2.2" stroke-linejoin="round" d="M14.500 1.500c6.300 0 11.300 3.900 11.300 8.800s-5 8.800-11.300 8.800c-1.700 0-3.300-.3-4.700-.8L2 22.300l2.400-5.200C3 15.600 2.200 13.500 2.200 11.300 2.200 5.900 7.700 1.500 14.500 1.500z"/></svg>
<div>
<div class="a rl" style="left:0;top:319px;width:100%;height:2px"></div>
<div class="a badge" style="left:20.3px;top:254px;width:113.4px;height:40.5px;background:#cfcfcf;border-color:#000;">
</div>
<span class="t m" style="left:28.97px;top:266.00px;font-size:21.5px;transform:scaleX(1.0671);transform-origin:0 0;color:#000;">MT-26-79</span>
<svg class="a" style="left:212.9px;top:263.2px;overflow:visible" width="29.2" height="23.3" viewBox="0 0 30 24" preserveAspectRatio="none"><path fill="#000" d="M0 12S5 0.500 15 0.500 30 12 30 12s-5 11.500-15 11.500S0 12 0 12z"/><circle cx="15" cy="12" r="7" fill="#fff"/><circle cx="15" cy="12" r="4.900" fill="#000"/><circle cx="13" cy="10" r="2" fill="#fff"/></svg>
<svg class="a" style="left:378.8px;top:262.4px;overflow:visible" width="26.4" height="23.9" viewBox="0 0 26 24" preserveAspectRatio="none"><rect x="0" y="9.500" width="5.500" height="14" rx="1.500" fill="#2b8a1a"/><path fill="#2b8a1a" d="M8 11.500c2.500-1.800 3.700-4.500 4.200-8C12.400 1.800 13.600.800 15 1c2 .3 2.900 2 2.700 4.200-.1 1.300-.5 2.600-1 4h6.300a2.300 2.300 0 0 1 2.100 3.100 2.300 2.300 0 0 1-.6 3.600 2.300 2.300 0 0 1-1 3.400 2.300 2.300 0 0 1-2.200 3.200h-6.800c-2 0-3.800-.6-5.400-1.700L8 20.200z"/></svg>
<div class="a badge" style="left:462.4px;top:254px;width:101.3px;height:40.5px;background:#9398ef;border-color:#1b1bcb;">
</div>
<span class="t m" style="left:471.01px;top:266.00px;font-size:21.5px;transform:scaleX(1.0183);transform-origin:0 0;color:#0e1a78;">WR-26-1</span>
<svg class="a" style="left:628px;top:263.2px;overflow:visible" width="28.8" height="23.3" viewBox="0 0 30 24" preserveAspectRatio="none"><path fill="#000" d="M0 12S5 0.500 15 0.500 30 12 30 12s-5 11.500-15 11.500S0 12 0 12z"/><circle cx="15" cy="12" r="7" fill="#fff"/><circle cx="15" cy="12" r="4.900" fill="#000"/><circle cx="13" cy="10" r="2" fill="#fff"/></svg>
<span class="t m" style="left:710.07px;top:263.00px;font-size:25px;letter-spacing:0.624px;transform:scaleX(1.0900);transform-origin:0 0;color:#101f80;">N/A</span>
<span class="t m" style="left:1263.07px;top:263.00px;font-size:25px;letter-spacing:0.624px;transform:scaleX(1.0900);transform-origin:0 0;color:#101f80;">N/A</span>
<span class="t m" style="left:1566.87px;top:263.00px;font-size:25px;letter-spacing:0.044px;transform:scaleX(1.0900);transform-origin:0 0;color:#101f80;">Atlas Manufacturing Group</span>
<span class="t m" style="left:1981.37px;top:263.00px;font-size:25px;letter-spacing:0.624px;transform:scaleX(1.0900);transform-origin:0 0;color:#101f80;">N/A</span>
<div class="a av" style="left:2259.2px;top:251.1px;width:44px;height:44px"><svg width="44" height="44" viewBox="0 0 48 48"><g style="filter:blur(.7px)"><defs><radialGradient id="bwg" cx=".5" cy=".35" r=".7"><stop offset="0" stop-color="#4a4a4a"/><stop offset="1" stop-color="#151515"/></radialGradient></defs>
<rect width="48" height="48" fill="url(#bwg)"/><rect x="0" y="12" width="15" height="22" fill="#6a6a6a"/><rect x="5" y="17" width="7" height="10" rx="1" fill="#d9d9d9"/><rect x="7.200" y="19.500" width="2.600" height="5" fill="#3a3a3a"/><rect x="37" y="4" width="6" height="30" fill="#8a8a8a"/><rect x="43" y="4" width="5" height="30" fill="#5a5a5a"/>
<ellipse cx="25" cy="21" rx="8.600" ry="11" fill="#8e8e8e"/><ellipse cx="24.500" cy="14" rx="7.600" ry="5.500" fill="#b2b2b2"/>
<path d="M17 24c1 7 4.500 10 8 10s7-3 8-10c-2 3-4.500 4.500-8 4.500S19 27 17 24z" fill="#6a6a6a"/><path d="M20.500 27.500q4.500 3 9 0z" fill="#d0d0d0"/>
<ellipse cx="21" cy="19.500" rx="1.600" ry=".8" fill="#2a2a2a"/><ellipse cx="29" cy="19.500" rx="1.600" ry=".8" fill="#2a2a2a"/>
<path d="M3 48c0-9 7-13 15-14l7 4 7-4c8 1 14 5 14 14z" fill="#2c2c2c"/><path d="M16 48l2-13 7 3.500 7-3.500 2 13z" fill="#0c0c0c"/><path d="M20 33.500l5 4 5-4-5 1z" fill="#8a8a8a"/></g></svg></div>
<svg class="a" style="left:2396.3px;top:263.0px;overflow:visible" width="26.7" height="22.8" viewBox="0 0 27 24" preserveAspectRatio="none"><path fill="none" stroke="#000" stroke-width="2.2" stroke-linejoin="round" d="M14.500 1.500c6.300 0 11.300 3.900 11.300 8.800s-5 8.800-11.300 8.800c-1.700 0-3.300-.3-4.700-.8L2 22.300l2.400-5.200C3 15.600 2.200 13.500 2.200 11.300 2.200 5.900 7.700 1.500 14.500 1.500z"/></svg>
<span class="t m" style="left:2451.57px;top:263.00px;font-size:25px;letter-spacing:0.108px;transform:scaleX(1.0900);transform-origin:0 0;color:#000;">about 2 months ago</span>
</div>
<div>
<div class="a rl" style="left:0;top:409px;width:100%;height:2px"></div>
<div class="a badge" style="left:20.3px;top:344px;width:112.5px;height:40.5px;background:#efffec;border-color:#1e8a12;">
</div>
<span class="t m" style="left:28.95px;top:356.00px;font-size:21.5px;transform:scaleX(1.0855);transform-origin:0 0;color:#1e8a12;">UT-26-78</span>
<svg class="a" style="left:212.9px;top:353.2px;overflow:visible" width="29.2" height="23.3" viewBox="0 0 30 24" preserveAspectRatio="none"><path fill="#000" d="M0 12S5 0.500 15 0.500 30 12 30 12s-5 11.500-15 11.500S0 12 0 12z"/><circle cx="15" cy="12" r="7" fill="#fff"/><circle cx="15" cy="12" r="4.900" fill="#000"/><circle cx="13" cy="10" r="2" fill="#fff"/></svg>
<svg class="a" style="left:295.5px;top:350.8px;overflow:visible" width="26.8" height="26.4" viewBox="0 0 26 26" preserveAspectRatio="none"><path fill="none" stroke="#000" stroke-width="1.9" stroke-linejoin="round" d="M1.200 10.200L13 1.500l11.800 8.700V22.500a2.200 2.200 0 0 1-2.200 2.200H3.400a2.200 2.200 0 0 1-2.200-2.200z"/><path fill="none" stroke="#000" stroke-width="1.9" stroke-linejoin="round" stroke-linecap="round" d="M1.500 11.500L13 19.500l11.500-8"/></svg>
<svg class="a" style="left:378.8px;top:352.4px;overflow:visible" width="26.4" height="23.9" viewBox="0 0 26 24" preserveAspectRatio="none"><rect x="0" y="9.500" width="5.500" height="14" rx="1.500" fill="#2b8a1a"/><path fill="#2b8a1a" d="M8 11.500c2.500-1.800 3.700-4.500 4.200-8C12.400 1.800 13.600.800 15 1c2 .3 2.900 2 2.700 4.200-.1 1.300-.5 2.600-1 4h6.300a2.300 2.300 0 0 1 2.100 3.100 2.300 2.300 0 0 1-.6 3.600 2.300 2.300 0 0 1-1 3.400 2.300 2.300 0 0 1-2.200 3.200h-6.800c-2 0-3.800-.6-5.400-1.700L8 20.200z"/></svg>
<div class="a badge" style="left:462.4px;top:344px;width:112.2px;height:40.5px;background:#9398ef;border-color:#1b1bcb;">
</div>
<span class="t m" style="left:471.03px;top:356.00px;font-size:21.5px;transform:scaleX(1.0053);transform-origin:0 0;color:#0e1a78;">WR-26-71</span>
<svg class="a" style="left:628px;top:353.2px;overflow:visible" width="28.8" height="23.3" viewBox="0 0 30 24" preserveAspectRatio="none"><path fill="#000" d="M0 12S5 0.500 15 0.500 30 12 30 12s-5 11.500-15 11.500S0 12 0 12z"/><circle cx="15" cy="12" r="7" fill="#fff"/><circle cx="15" cy="12" r="4.900" fill="#000"/><circle cx="13" cy="10" r="2" fill="#fff"/></svg>
<span class="t m" style="left:710.19px;top:353.00px;font-size:25px;transform:scaleX(0.9902);transform-origin:0 0;color:#101f80;">WT89 CAT777F</span>
<span class="t m" style="left:1263.12px;top:353.00px;font-size:25px;transform:scaleX(1.0470);transform-origin:0 0;color:#101f80;">Chassis</span>
<span class="t m" style="left:1566.87px;top:353.00px;font-size:25px;letter-spacing:0.268px;transform:scaleX(1.0900);transform-origin:0 0;color:#101f80;">Titanium Structural Solutions</span>
<span class="t m" style="left:1981.37px;top:353.00px;font-size:25px;letter-spacing:0.241px;transform:scaleX(1.0900);transform-origin:0 0;color:#101f80;">4th Post Test</span>
<div class="a av" style="left:2259.2px;top:341.1px;width:44px;height:44px"><svg width="44" height="44" viewBox="0 0 48 48"><g style="filter:blur(.7px)"><rect width="48" height="48" fill="#d3dde4"/>
<path d="M10 26c-2-12 3-21 14-22 8-1 14 4 14 10 1 6-1 12-3 15l-4-12-14-1-4 12z" fill="#dfd0ae"/>
<path d="M27 4c6 0 11 4 11 10l-2 5c-1-6-5-10-12-11z" fill="#8f8470"/>
<ellipse cx="24" cy="24.500" rx="8.300" ry="10.500" fill="#f0c5aa"/>
<path d="M14 20c3-8 10-12 21-9-7 1-13 4-17 11z" fill="#eadcbc"/>
<ellipse cx="20.500" cy="22.500" rx="1.300" ry=".8" fill="#4a3a30"/><ellipse cx="28" cy="22.500" rx="1.300" ry=".8" fill="#4a3a30"/>
<path d="M19.500 28.500q4.500 4.500 9.500 0z" fill="#fff" stroke="#d9707a" stroke-width="1"/>
<path d="M7 48c1-7 6-10.500 12-11.500l5 5 5-5c6 1 11 4.500 12 11.500z" fill="#1b2a52"/>
<path d="M19.500 35l4.500 8 4.500-8-4.500 1z" fill="#efc4a9"/></g></svg></div>
<span class="t m" style="left:2451.57px;top:353.00px;font-size:25px;letter-spacing:0.108px;transform:scaleX(1.0900);transform-origin:0 0;color:#000;">about 2 months ago</span>
</div>
<div>
<div class="a rl" style="left:0;top:499px;width:100%;height:2px"></div>
<div class="a badge" style="left:20.3px;top:434px;width:114.1px;height:40.5px;background:#efffec;border-color:#1e8a12;">
</div>
<span class="t m" style="left:28.95px;top:446.00px;font-size:21.5px;letter-spacing:0.157px;transform:scaleX(1.0900);transform-origin:0 0;color:#1e8a12;">UT-26-28</span>
<svg class="a" style="left:212.9px;top:443.2px;overflow:visible" width="29.2" height="23.3" viewBox="0 0 30 24" preserveAspectRatio="none"><path fill="#000" d="M0 12S5 0.500 15 0.500 30 12 30 12s-5 11.500-15 11.500S0 12 0 12z"/><circle cx="15" cy="12" r="7" fill="#fff"/><circle cx="15" cy="12" r="4.900" fill="#000"/><circle cx="13" cy="10" r="2" fill="#fff"/></svg>
<svg class="a" style="left:295.5px;top:440.8px;overflow:visible" width="26.8" height="26.4" viewBox="0 0 26 26" preserveAspectRatio="none"><path fill="none" stroke="#000" stroke-width="1.9" stroke-linejoin="round" d="M1.200 10.200L13 1.500l11.800 8.700V22.500a2.200 2.200 0 0 1-2.200 2.200H3.400a2.200 2.200 0 0 1-2.200-2.200z"/><path fill="none" stroke="#000" stroke-width="1.9" stroke-linejoin="round" stroke-linecap="round" d="M1.500 11.500L13 19.500l11.500-8"/></svg>
<svg class="a" style="left:378.8px;top:442.4px;overflow:visible" width="26.4" height="23.9" viewBox="0 0 26 24" preserveAspectRatio="none"><rect x="0" y="9.500" width="5.500" height="14" rx="1.500" fill="#2b8a1a"/><path fill="#2b8a1a" d="M8 11.500c2.500-1.800 3.700-4.500 4.200-8C12.400 1.800 13.600.800 15 1c2 .3 2.900 2 2.700 4.200-.1 1.300-.5 2.600-1 4h6.300a2.300 2.300 0 0 1 2.100 3.100 2.300 2.300 0 0 1-.6 3.600 2.300 2.300 0 0 1-1 3.400 2.300 2.300 0 0 1-2.200 3.200h-6.800c-2 0-3.800-.6-5.400-1.700L8 20.200z"/></svg>
<div class="a badge" style="left:462.4px;top:434px;width:128.0px;height:40.5px;background:#9398ef;border-color:#1b1bcb;">
</div>
<span class="t m" style="left:470.99px;top:446.00px;font-size:21.5px;transform:scaleX(1.0396);transform-origin:0 0;color:#0e1a78;">WR-26-149</span>
<svg class="a" style="left:628px;top:443.2px;overflow:visible" width="28.8" height="23.3" viewBox="0 0 30 24" preserveAspectRatio="none"><path fill="#000" d="M0 12S5 0.500 15 0.500 30 12 30 12s-5 11.500-15 11.500S0 12 0 12z"/><circle cx="15" cy="12" r="7" fill="#fff"/><circle cx="15" cy="12" r="4.900" fill="#000"/><circle cx="13" cy="10" r="2" fill="#fff"/></svg>
<span class="t m" style="left:710.08px;top:443.00px;font-size:25px;transform:scaleX(1.0821);transform-origin:0 0;color:#101f80;">Process Heater PH-360</span>
<span class="t m" style="left:1263.10px;top:443.00px;font-size:25px;transform:scaleX(1.0661);transform-origin:0 0;color:#101f80;">DC-75-T8</span>
<span class="t m" style="left:1566.90px;top:443.00px;font-size:25px;transform:scaleX(1.0703);transform-origin:0 0;color:#101f80;">Nexus Pipeline Systems</span>
<span class="t m" style="left:1981.38px;top:443.00px;font-size:25px;transform:scaleX(1.0811);transform-origin:0 0;color:#101f80;">12th Post Test</span>
<div class="a av" style="left:2259.2px;top:431.1px;width:44px;height:44px"><svg width="44" height="44" viewBox="0 0 48 48"><g style="filter:blur(.7px)"><rect width="48" height="48" fill="#d2cbc0"/><rect width="9" height="48" fill="#b7b0a4"/><rect x="39" width="9" height="48" fill="#a9a396"/><rect x="41" y="10" width="7" height="38" fill="#8d877b"/>
<path d="M11 22C10 10 16 4 24 4s14 6 13 18l-2-8c-3-3-7-4-11-4s-8 1-11 4z" fill="#6b4a36"/>
<ellipse cx="24" cy="25" rx="11.500" ry="15" fill="#e6c4b0"/>
<path d="M12.500 27c0 12 5 19 11.500 19s11.500-7 11.500-19c-1 5-3 7-5 7-2-2-4-3-6.500-3s-4.500 1-6.500 3c-2 0-4-2-5-7z" fill="#8e5f45"/>
<path d="M20 36.500q4 1.500 8 0-4 2.500-8 0z" fill="#c98a7a"/>
<ellipse cx="19" cy="22.500" rx="2" ry="1.100" fill="#3d3a3a"/><ellipse cx="29" cy="22.500" rx="2" ry="1.100" fill="#3d3a3a"/>
<path d="M15.500 19.500q3.500-2 6.500-.5M26 19q3-1.500 6.500.5" stroke="#6b4a36" stroke-width="1.200" fill="none"/></g></svg></div>
<span class="t m" style="left:2451.57px;top:443.00px;font-size:25px;letter-spacing:0.030px;transform:scaleX(1.0900);transform-origin:0 0;color:#000;">2 months ago</span>
</div>
<div>
<div class="a rl" style="left:0;top:589px;width:100%;height:2px"></div>
<div class="a badge" style="left:20.3px;top:524px;width:116.1px;height:40.5px;background:#cfcfcf;border-color:#000;">
</div>
<span class="t m" style="left:28.95px;top:536.00px;font-size:21.5px;letter-spacing:0.078px;transform:scaleX(1.0900);transform-origin:0 0;color:#000;">MT-26-53</span>
<svg class="a" style="left:212.9px;top:533.2px;overflow:visible" width="29.2" height="23.3" viewBox="0 0 30 24" preserveAspectRatio="none"><path fill="#000" d="M0 12S5 0.500 15 0.500 30 12 30 12s-5 11.500-15 11.500S0 12 0 12z"/><circle cx="15" cy="12" r="7" fill="#fff"/><circle cx="15" cy="12" r="4.900" fill="#000"/><circle cx="13" cy="10" r="2" fill="#fff"/></svg>
<svg class="a" style="left:378.8px;top:532.4px;overflow:visible" width="26.4" height="23.9" viewBox="0 0 26 24" preserveAspectRatio="none"><rect x="0" y="9.500" width="5.500" height="14" rx="1.500" fill="#2b8a1a"/><path fill="#2b8a1a" d="M8 11.500c2.500-1.800 3.700-4.500 4.200-8C12.400 1.800 13.600.800 15 1c2 .3 2.900 2 2.700 4.200-.1 1.300-.5 2.600-1 4h6.300a2.300 2.300 0 0 1 2.100 3.100 2.300 2.300 0 0 1-.6 3.600 2.300 2.300 0 0 1-1 3.400 2.300 2.300 0 0 1-2.200 3.200h-6.800c-2 0-3.800-.6-5.400-1.700L8 20.200z"/></svg>
<div class="a badge" style="left:462.4px;top:524px;width:112.2px;height:40.5px;background:#9398ef;border-color:#1b1bcb;">
</div>
<span class="t m" style="left:471.03px;top:536.00px;font-size:21.5px;transform:scaleX(1.0053);transform-origin:0 0;color:#0e1a78;">WR-26-71</span>
<svg class="a" style="left:628px;top:533.2px;overflow:visible" width="28.8" height="23.3" viewBox="0 0 30 24" preserveAspectRatio="none"><path fill="#000" d="M0 12S5 0.500 15 0.500 30 12 30 12s-5 11.500-15 11.500S0 12 0 12z"/><circle cx="15" cy="12" r="7" fill="#fff"/><circle cx="15" cy="12" r="4.900" fill="#000"/><circle cx="13" cy="10" r="2" fill="#fff"/></svg>
<span class="t m" style="left:710.08px;top:533.00px;font-size:25px;transform:scaleX(1.0871);transform-origin:0 0;color:#101f80;">Offshore Platform Module M-3</span>
<span class="t m" style="left:1263.07px;top:533.00px;font-size:25px;letter-spacing:0.804px;transform:scaleX(1.0900);transform-origin:0 0;color:#101f80;">C-8845-A5</span>
<span class="t m" style="left:1566.87px;top:533.00px;font-size:25px;letter-spacing:0.078px;transform:scaleX(1.0900);transform-origin:0 0;color:#101f80;">Petromax Industries Ltd.</span>
<span class="t m" style="left:1981.37px;top:533.00px;font-size:25px;transform:scaleX(1.0900);transform-origin:0 0;color:#101f80;">7th Post Test</span>
<div class="a av" style="left:2259.2px;top:521.1px;width:44px;height:44px"><svg width="44" height="44" viewBox="0 0 48 48"><g style="filter:blur(.7px)"><rect width="48" height="48" fill="#eef1f1"/><rect y="12" width="48" height="6" fill="#93a4b4"/><rect y="18" width="48" height="6" fill="#cfd8dd"/><rect y="23" width="48" height="25" fill="#4a5346"/><rect y="23" width="48" height="5" fill="#66705f"/>
<path d="M13 22c-3-10 2-18 11-18 8 0 13 6 11 16-2-5-5-8-10-8-6 0-9 4-12 10z" fill="#35261f"/>
<ellipse cx="25" cy="23.500" rx="8.800" ry="11.500" fill="#c79f86" transform="rotate(8 25 23.500)"/>
<path d="M16 17c3-6 12-8 18-2-5-1-12-1-18 2z" fill="#35261f"/>
<path d="M21 28.500q4.500 3 8.500-.5z" fill="#f3efec"/>
<ellipse cx="21.500" cy="22" rx="1.500" ry=".8" fill="#3a2a22"/><ellipse cx="29.500" cy="22.500" rx="1.500" ry=".8" fill="#3a2a22"/>
<path d="M5 48c1-8 8-11.500 20-11.500S43 40 44 48z" fill="#6e6a68"/><path d="M20 36l5 5 5-5z" fill="#b88f78"/></g></svg></div>
<span class="t m" style="left:2451.57px;top:533.00px;font-size:25px;letter-spacing:0.030px;transform:scaleX(1.0900);transform-origin:0 0;color:#000;">2 months ago</span>
</div>
<div>
<div class="a rl" style="left:0;top:679px;width:100%;height:2px"></div>
<div class="a badge" style="left:20.3px;top:614px;width:113.1px;height:40.5px;background:#efffec;border-color:#1e8a12;">
</div>
<span class="t m" style="left:28.95px;top:626.00px;font-size:21.5px;letter-spacing:0.026px;transform:scaleX(1.0900);transform-origin:0 0;color:#1e8a12;">UT-26-29</span>
<svg class="a" style="left:212.9px;top:623.2px;overflow:visible" width="29.2" height="23.3" viewBox="0 0 30 24" preserveAspectRatio="none"><path fill="#000" d="M0 12S5 0.500 15 0.500 30 12 30 12s-5 11.500-15 11.500S0 12 0 12z"/><circle cx="15" cy="12" r="7" fill="#fff"/><circle cx="15" cy="12" r="4.900" fill="#000"/><circle cx="13" cy="10" r="2" fill="#fff"/></svg>
<svg class="a" style="left:378.8px;top:622.4px;overflow:visible" width="26.4" height="23.9" viewBox="0 0 26 24" preserveAspectRatio="none"><rect x="0" y="9.500" width="5.500" height="14" rx="1.500" fill="#2b8a1a"/><path fill="#2b8a1a" d="M8 11.500c2.500-1.800 3.700-4.500 4.200-8C12.400 1.800 13.600.800 15 1c2 .3 2.900 2 2.700 4.200-.1 1.300-.5 2.600-1 4h6.300a2.300 2.300 0 0 1 2.100 3.100 2.300 2.300 0 0 1-.6 3.600 2.300 2.300 0 0 1-1 3.400 2.300 2.300 0 0 1-2.200 3.200h-6.800c-2 0-3.800-.6-5.400-1.700L8 20.200z"/></svg>
<div class="a badge" style="left:462.4px;top:614px;width:127.0px;height:40.5px;background:#9398ef;border-color:#1b1bcb;">
</div>
<span class="t m" style="left:471.00px;top:626.00px;font-size:21.5px;transform:scaleX(1.0305);transform-origin:0 0;color:#0e1a78;">WR-26-221</span>
<svg class="a" style="left:628px;top:623.2px;overflow:visible" width="28.8" height="23.3" viewBox="0 0 30 24" preserveAspectRatio="none"><path fill="#000" d="M0 12S5 0.500 15 0.500 30 12 30 12s-5 11.500-15 11.500S0 12 0 12z"/><circle cx="15" cy="12" r="7" fill="#fff"/><circle cx="15" cy="12" r="4.900" fill="#000"/><circle cx="13" cy="10" r="2" fill="#fff"/></svg>
<span class="t m" style="left:710.09px;top:623.00px;font-size:25px;transform:scaleX(1.0757);transform-origin:0 0;color:#101f80;">Pipeline Section NPS-24</span>
<span class="t m" style="left:1263.07px;top:623.00px;font-size:25px;letter-spacing:0.184px;transform:scaleX(1.0900);transform-origin:0 0;color:#101f80;">RP-12-J8</span>
<span class="t m" style="left:1566.89px;top:623.00px;font-size:25px;transform:scaleX(1.0737);transform-origin:0 0;color:#101f80;">Synergy Compressor Systems</span>
<span class="t m" style="left:1981.39px;top:623.00px;font-size:25px;transform:scaleX(1.0752);transform-origin:0 0;color:#101f80;">10th Pre Test</span>
<div class="a av" style="left:2259.2px;top:611.1px;width:44px;height:44px"><svg width="44" height="44" viewBox="0 0 48 48"><g style="filter:blur(.7px)"><rect width="48" height="48" fill="#7a8c3f"/><circle cx="8" cy="14" r="9" fill="#93963f"/><circle cx="42" cy="28" r="10" fill="#8aa04a"/><circle cx="40" cy="8" r="8" fill="#5f7a33"/><circle cx="6" cy="34" r="8" fill="#a09a52"/>
<path d="M12.500 24C10 11 16 4 24.500 4S38 11 35.500 24l-2-9c-3-3-6-4-9-4s-7 1-10 4z" fill="#3a291d"/>
<ellipse cx="24" cy="24" rx="10.300" ry="13.500" fill="#dcb198"/>
<path d="M14 27c1 9 5 13 10 13s9-4 10-13c-2 5-5 7-10 7s-8-2-10-7z" fill="#a27d66"/>
<path d="M19 29q5 4.500 10 0z" fill="#fbf8f4"/>
<ellipse cx="19.500" cy="21.500" rx="1.700" ry=".9" fill="#3a2a22"/><ellipse cx="28.500" cy="21.500" rx="1.700" ry=".9" fill="#3a2a22"/>
<path d="M4 48c1-6 7-9.500 14-10.500l6 4 6-4c7 1 13 4.500 14 10.500z" fill="#1e1e1e"/><path d="M18.500 37l5.500 6 5.500-6-5.500 2z" fill="#d3a78e"/></g></svg></div>
<span class="t m" style="left:2451.57px;top:623.00px;font-size:25px;letter-spacing:0.030px;transform:scaleX(1.0900);transform-origin:0 0;color:#000;">2 months ago</span>
</div>
<div>
<div class="a rl" style="left:0;top:769px;width:100%;height:2px"></div>
<div class="a badge" style="left:20.3px;top:704px;width:115.1px;height:40.5px;background:#efffec;border-color:#1e8a12;">
</div>
<span class="t m" style="left:28.95px;top:716.00px;font-size:21.5px;letter-spacing:0.288px;transform:scaleX(1.0900);transform-origin:0 0;color:#1e8a12;">UT-26-80</span>
<svg class="a" style="left:212.9px;top:713.2px;overflow:visible" width="29.2" height="23.3" viewBox="0 0 30 24" preserveAspectRatio="none"><path fill="#000" d="M0 12S5 0.500 15 0.500 30 12 30 12s-5 11.500-15 11.500S0 12 0 12z"/><circle cx="15" cy="12" r="7" fill="#fff"/><circle cx="15" cy="12" r="4.900" fill="#000"/><circle cx="13" cy="10" r="2" fill="#fff"/></svg>
<svg class="a" style="left:295.5px;top:710.8px;overflow:visible" width="26.8" height="26.4" viewBox="0 0 26 26" preserveAspectRatio="none"><path fill="none" stroke="#000" stroke-width="1.9" stroke-linejoin="round" d="M1.200 10.200L13 1.500l11.800 8.700V22.500a2.200 2.200 0 0 1-2.200 2.200H3.400a2.200 2.200 0 0 1-2.200-2.200z"/><path fill="none" stroke="#000" stroke-width="1.9" stroke-linejoin="round" stroke-linecap="round" d="M1.500 11.500L13 19.500l11.500-8"/></svg>
<svg class="a" style="left:378.8px;top:712.4px;overflow:visible" width="26.4" height="23.9" viewBox="0 0 26 24" preserveAspectRatio="none"><rect x="0" y="9.500" width="5.500" height="14" rx="1.500" fill="#2b8a1a"/><path fill="#2b8a1a" d="M8 11.500c2.500-1.800 3.700-4.500 4.200-8C12.400 1.800 13.600.800 15 1c2 .3 2.900 2 2.700 4.200-.1 1.300-.5 2.600-1 4h6.300a2.300 2.300 0 0 1 2.100 3.100 2.300 2.300 0 0 1-.6 3.600 2.300 2.300 0 0 1-1 3.400 2.300 2.300 0 0 1-2.200 3.200h-6.800c-2 0-3.800-.6-5.400-1.700L8 20.200z"/></svg>
<div class="a badge" style="left:462.4px;top:704px;width:130.1px;height:40.5px;background:#9398ef;border-color:#1b1bcb;">
</div>
<span class="t m" style="left:470.98px;top:716.00px;font-size:21.5px;transform:scaleX(1.0587);transform-origin:0 0;color:#0e1a78;">WR-26-475</span>
<svg class="a" style="left:628px;top:713.2px;overflow:visible" width="28.8" height="23.3" viewBox="0 0 30 24" preserveAspectRatio="none"><path fill="#000" d="M0 12S5 0.500 15 0.500 30 12 30 12s-5 11.500-15 11.500S0 12 0 12z"/><circle cx="15" cy="12" r="7" fill="#fff"/><circle cx="15" cy="12" r="4.900" fill="#000"/><circle cx="13" cy="10" r="2" fill="#fff"/></svg>
<span class="t m" style="left:710.12px;top:713.00px;font-size:25px;transform:scaleX(1.0485);transform-origin:0 0;color:#101f80;">Fire Water Pump FWP-320</span>
<span class="t m" style="left:1263.09px;top:713.00px;font-size:25px;transform:scaleX(1.0714);transform-origin:0 0;color:#101f80;">HE-512-B2</span>
<span class="t m" style="left:1566.90px;top:713.00px;font-size:25px;transform:scaleX(1.0669);transform-origin:0 0;color:#101f80;">Meridian Heat Exchanger Group</span>
<span class="t m" style="left:1981.39px;top:713.00px;font-size:25px;transform:scaleX(1.0793);transform-origin:0 0;color:#101f80;">7th Pre Test</span>
<div class="a av" style="left:2259.2px;top:701.1px;width:44px;height:44px"><svg width="44" height="44" viewBox="0 0 48 48"><g style="filter:blur(.7px)"><rect width="48" height="48" fill="#1e2452"/><rect width="9" height="48" fill="#f3e8c4"/><rect x="38" y="14" width="10" height="10" fill="#8d9a86"/><rect x="40" y="4" width="6" height="8" fill="#b4333a"/><rect x="9" y="0" width="6" height="12" fill="#4a4f7c"/>
<path d="M9 48C7 22 12 5 26 4c10 0 15 8 14 20l-2 24z" fill="#2b2a5c"/>
<ellipse cx="24.500" cy="28" rx="10" ry="13" fill="#d9a791"/>
<path d="M11 24C12 10 18 4 27 5c7 1 12 7 12 15-6-2-11-6-14-11-2 6-7 11-14 15z" fill="#34306a"/>
<rect x="13.500" y="20.500" width="10" height="7" rx="2.500" fill="rgba(255,255,255,.35)" stroke="#f4f4f4" stroke-width="1.500"/><rect x="26" y="20.500" width="10" height="7" rx="2.500" fill="rgba(255,255,255,.35)" stroke="#f4f4f4" stroke-width="1.500"/>
<ellipse cx="18.500" cy="24" rx="1.600" ry="1" fill="#3a2a2a"/><ellipse cx="31" cy="24" rx="1.600" ry="1" fill="#3a2a2a"/>
<path d="M19.500 34.500q5 4 10 0z" fill="#f7ecec" stroke="#b5535e" stroke-width=".9"/></g></svg></div>
<span class="t m" style="left:2451.57px;top:713.00px;font-size:25px;letter-spacing:0.030px;transform:scaleX(1.0900);transform-origin:0 0;color:#000;">2 months ago</span>
</div>
<div>
<div class="a rl" style="left:0;top:859px;width:100%;height:2px"></div>
<div class="a badge" style="left:20.3px;top:794px;width:113.1px;height:40.5px;background:#efffec;border-color:#1e8a12;">
</div>
<span class="t m" style="left:28.95px;top:806.00px;font-size:21.5px;letter-spacing:0.026px;transform:scaleX(1.0900);transform-origin:0 0;color:#1e8a12;">UT-26-23</span>
<svg class="a" style="left:212.9px;top:803.2px;overflow:visible" width="29.2" height="23.3" viewBox="0 0 30 24" preserveAspectRatio="none"><path fill="#000" d="M0 12S5 0.500 15 0.500 30 12 30 12s-5 11.500-15 11.500S0 12 0 12z"/><circle cx="15" cy="12" r="7" fill="#fff"/><circle cx="15" cy="12" r="4.900" fill="#000"/><circle cx="13" cy="10" r="2" fill="#fff"/></svg>
<svg class="a" style="left:295.5px;top:800.8px;overflow:visible" width="26.8" height="26.4" viewBox="0 0 26 26" preserveAspectRatio="none"><path fill="none" stroke="#000" stroke-width="1.9" stroke-linejoin="round" d="M1.200 10.200L13 1.500l11.800 8.700V22.500a2.200 2.200 0 0 1-2.200 2.200H3.400a2.200 2.200 0 0 1-2.200-2.200z"/><path fill="none" stroke="#000" stroke-width="1.9" stroke-linejoin="round" stroke-linecap="round" d="M1.500 11.500L13 19.500l11.500-8"/></svg>
<svg class="a" style="left:378.8px;top:802.4px;overflow:visible" width="26.4" height="23.9" viewBox="0 0 26 24" preserveAspectRatio="none"><rect x="0" y="9.500" width="5.500" height="14" rx="1.500" fill="#2b8a1a"/><path fill="#2b8a1a" d="M8 11.500c2.500-1.800 3.700-4.500 4.200-8C12.400 1.800 13.600.800 15 1c2 .3 2.900 2 2.700 4.200-.1 1.300-.5 2.600-1 4h6.300a2.300 2.300 0 0 1 2.100 3.100 2.300 2.300 0 0 1-.6 3.600 2.300 2.300 0 0 1-1 3.400 2.300 2.300 0 0 1-2.200 3.200h-6.800c-2 0-3.800-.6-5.400-1.700L8 20.200z"/></svg>
<div class="a badge" style="left:462.4px;top:794px;width:115.2px;height:40.5px;background:#9398ef;border-color:#1b1bcb;">
</div>
<span class="t m" style="left:471.00px;top:806.00px;font-size:21.5px;transform:scaleX(1.0359);transform-origin:0 0;color:#0e1a78;">WR-26-41</span>
<svg class="a" style="left:628px;top:803.2px;overflow:visible" width="28.8" height="23.3" viewBox="0 0 30 24" preserveAspectRatio="none"><path fill="#000" d="M0 12S5 0.500 15 0.500 30 12 30 12s-5 11.500-15 11.500S0 12 0 12z"/><circle cx="15" cy="12" r="7" fill="#fff"/><circle cx="15" cy="12" r="4.900" fill="#000"/><circle cx="13" cy="10" r="2" fill="#fff"/></svg>
<span class="t m" style="left:710.09px;top:803.00px;font-size:25px;transform:scaleX(1.0729);transform-origin:0 0;color:#101f80;">Cooling Tower CT-650</span>
<span class="t m" style="left:1263.07px;top:803.00px;font-size:25px;letter-spacing:0.309px;transform:scaleX(1.0900);transform-origin:0 0;color:#101f80;">CV-322-D4</span>
<span class="t m" style="left:1566.89px;top:803.00px;font-size:25px;transform:scaleX(1.0737);transform-origin:0 0;color:#101f80;">Synergy Compressor Systems</span>
<span class="t m" style="left:1981.37px;top:803.00px;font-size:25px;letter-spacing:0.043px;transform:scaleX(1.0900);transform-origin:0 0;color:#101f80;">3rd Post Test</span>
<div class="a av" style="left:2259.2px;top:791.1px;width:44px;height:44px"><svg width="44" height="44" viewBox="0 0 48 48"><g style="filter:blur(.7px)"><rect width="48" height="48" fill="#7a8c3f"/><circle cx="8" cy="14" r="9" fill="#93963f"/><circle cx="42" cy="28" r="10" fill="#8aa04a"/><circle cx="40" cy="8" r="8" fill="#5f7a33"/><circle cx="6" cy="34" r="8" fill="#a09a52"/>
<path d="M12.500 24C10 11 16 4 24.500 4S38 11 35.500 24l-2-9c-3-3-6-4-9-4s-7 1-10 4z" fill="#3a291d"/>
<ellipse cx="24" cy="24" rx="10.300" ry="13.500" fill="#dcb198"/>
<path d="M14 27c1 9 5 13 10 13s9-4 10-13c-2 5-5 7-10 7s-8-2-10-7z" fill="#a27d66"/>
<path d="M19 29q5 4.500 10 0z" fill="#fbf8f4"/>
<ellipse cx="19.500" cy="21.500" rx="1.700" ry=".9" fill="#3a2a22"/><ellipse cx="28.500" cy="21.500" rx="1.700" ry=".9" fill="#3a2a22"/>
<path d="M4 48c1-6 7-9.500 14-10.500l6 4 6-4c7 1 13 4.500 14 10.500z" fill="#1e1e1e"/><path d="M18.500 37l5.500 6 5.500-6-5.500 2z" fill="#d3a78e"/></g></svg></div>
<span class="t m" style="left:2451.57px;top:803.00px;font-size:25px;letter-spacing:0.030px;transform:scaleX(1.0900);transform-origin:0 0;color:#000;">2 months ago</span>
</div>
</section>
</main>
</body></html>
